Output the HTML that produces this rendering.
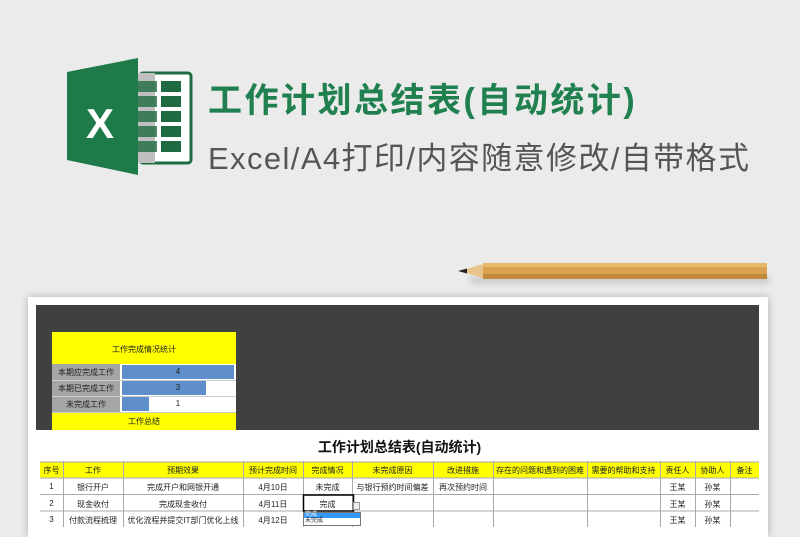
<!DOCTYPE html>
<html><head><meta charset="utf-8"><style>
*{margin:0;padding:0;box-sizing:border-box}
body{width:800px;height:526px;background:#ebebeb;position:relative;overflow:hidden;font-family:"Liberation Sans","Noto Sans CJK SC",sans-serif}
.a{position:absolute}
.t1{left:208px;top:73px;font-size:34px;font-weight:bold;color:#21804f;letter-spacing:2.5px;white-space:nowrap}
.t2{left:208px;top:133px;font-size:31px;color:#555;white-space:nowrap;letter-spacing:1.4px}
.c{position:absolute;font-size:8px;color:#222;text-align:center;white-space:nowrap;overflow:hidden}
</style></head><body>
<svg class="a" style="left:60px;top:50px" width="140" height="130" viewBox="60 50 140 130">
<rect x="140" y="73" width="51" height="90" rx="3" fill="#fff" stroke="#1e6b41" stroke-width="3"/>
<rect x="138" y="73" width="17" height="90" fill="#bfbfbf"/>
<g fill="#1e6b41">
<rect x="161" y="81" width="20" height="11"/><rect x="161" y="96" width="20" height="11"/><rect x="161" y="111" width="20" height="11"/><rect x="161" y="126" width="20" height="11"/><rect x="161" y="141" width="20" height="11"/>
<rect x="138" y="81" width="19" height="11" opacity=".8"/><rect x="138" y="96" width="19" height="11" opacity=".8"/><rect x="138" y="111" width="19" height="11" opacity=".8"/><rect x="138" y="126" width="19" height="11" opacity=".8"/><rect x="138" y="141" width="19" height="11" opacity=".8"/>
</g>
<polygon points="67,72 138,58 138,175 67,160" fill="#1f7a4a"/>
<text x="100" y="138" font-family="Liberation Sans" font-weight="bold" font-size="42" fill="#fff" text-anchor="middle">X</text>
</svg>
<div class="a t1">工作计划总结表(自动统计)</div>
<div class="a t2">Excel/A4打印/内容随意修改/自带格式</div>
<!-- pencil -->
<div class="a" style="left:470px;top:276px;width:300px;height:8px;background:#000;opacity:.12;filter:blur(3px)"></div>
<svg class="a" style="left:455px;top:260px" width="315" height="24">
<polygon points="5,11 28,4 28,18" fill="#e9c48a"/>
<polygon points="3,11 12,8.5 12,13.5" fill="#222"/>
<rect x="28" y="3" width="284" height="16" fill="#d9a250"/>
<rect x="28" y="3" width="284" height="4" fill="#e6b868"/>
<rect x="28" y="14" width="284" height="5" fill="#c08a3a"/>
</svg>
<!-- paper -->
<div class="a" style="left:28px;top:297px;width:740px;height:240px;background:#fff;box-shadow:0 0 8px rgba(0,0,0,.25)"></div>
<div class="a" style="left:36px;top:305px;width:723px;height:125px;background:#404040"></div>
<!-- summary -->
<div class="a" style="left:52px;top:332px;width:184px;height:98px;background:#ffff00"></div>
<div class="c" style="left:52px;top:344px;width:184px">工作完成情况统计</div>
<div class="a" style="left:52px;top:364px;width:184px;height:48px;background:#fff"></div>
<div class="a" style="left:52px;top:364px;width:68px;height:48px;background:#a6a6a6"></div>
<div class="c" style="left:52px;top:367px;width:68px">本期应完成工作</div>
<div class="c" style="left:52px;top:383px;width:68px">本期已完成工作</div>
<div class="c" style="left:52px;top:399px;width:68px">未完成工作</div>
<div class="a" style="left:122px;top:365px;width:112px;height:14px;background:#5f8fcb"></div>
<div class="a" style="left:122px;top:381px;width:84px;height:14px;background:#5f8fcb"></div>
<div class="a" style="left:122px;top:397px;width:27px;height:14px;background:#5f8fcb"></div>
<div class="a" style="left:52px;top:380px;width:184px;height:1px;background:#ccc"></div>
<div class="a" style="left:52px;top:396px;width:184px;height:1px;background:#ccc"></div>
<div class="a" style="left:52px;top:412px;width:184px;height:1px;background:#ccc"></div>
<div class="c" style="left:120px;top:367px;width:116px">4</div>
<div class="c" style="left:120px;top:383px;width:116px">3</div>
<div class="c" style="left:120px;top:399px;width:116px">1</div>
<div class="c" style="left:52px;top:416px;width:184px">工作总结</div>
<!-- table -->
<div class="a" style="left:40px;top:430px;width:719px;height:100px;background:#fff"></div>
<div class="a" style="left:40px;top:437px;width:719px;text-align:center;font-size:14px;font-weight:bold;color:#111">工作计划总结表(自动统计)</div>
<div class="a" style="left:40px;top:462px;width:719px;height:16px;background:#ffff00"></div>
<svg class="a" style="left:40px;top:461px" width="720" height="66">
<g stroke="#aaa" stroke-width="1">
<line x1="0" y1="1" x2="719" y2="1"/><line x1="0" y1="17" x2="719" y2="17"/><line x1="0" y1="33.5" x2="719" y2="33.5"/><line x1="0" y1="50" x2="719" y2="50"/>
<line x1="23.5" y1="0" x2="23.5" y2="66"/><line x1="83.5" y1="0" x2="83.5" y2="66"/><line x1="203.5" y1="0" x2="203.5" y2="66"/><line x1="263.5" y1="0" x2="263.5" y2="66"/><line x1="312.5" y1="0" x2="312.5" y2="66"/><line x1="393.5" y1="0" x2="393.5" y2="66"/><line x1="453.5" y1="0" x2="453.5" y2="66"/><line x1="547.5" y1="0" x2="547.5" y2="66"/><line x1="620.5" y1="0" x2="620.5" y2="66"/><line x1="655.5" y1="0" x2="655.5" y2="66"/><line x1="690.5" y1="0" x2="690.5" y2="66"/>
</g>
<rect x="263.5" y="34" width="50" height="16" fill="none" stroke="#000" stroke-width="1.5"/>
</svg>
<div class="c" style="left:40px;top:465px;width:23px">序号</div>
<div class="c" style="left:63px;top:465px;width:60px">工作</div>
<div class="c" style="left:123px;top:465px;width:120px">预期效果</div>
<div class="c" style="left:243px;top:465px;width:60px">预计完成时间</div>
<div class="c" style="left:303px;top:465px;width:49px">完成情况</div>
<div class="c" style="left:352px;top:465px;width:81px">未完成原因</div>
<div class="c" style="left:433px;top:465px;width:60px">改进措施</div>
<div class="c" style="left:493px;top:465px;width:94px">存在的问题和遇到的困难</div>
<div class="c" style="left:587px;top:465px;width:73px">需要的帮助和支持</div>
<div class="c" style="left:660px;top:465px;width:35px">责任人</div>
<div class="c" style="left:695px;top:465px;width:35px">协助人</div>
<div class="c" style="left:730px;top:465px;width:29px">备注</div>

<div class="c" style="left:40px;top:482px;width:23px">1</div>
<div class="c" style="left:63px;top:482px;width:60px">银行开户</div>
<div class="c" style="left:123px;top:482px;width:120px">完成开户和网银开通</div>
<div class="c" style="left:243px;top:482px;width:60px">4月10日</div>
<div class="c" style="left:303px;top:482px;width:49px">未完成</div>
<div class="c" style="left:352px;top:482px;width:81px">与银行预约时间偏差</div>
<div class="c" style="left:433px;top:482px;width:60px">再次预约时间</div>
<div class="c" style="left:660px;top:482px;width:35px">王某</div>
<div class="c" style="left:695px;top:482px;width:35px">孙某</div>

<div class="c" style="left:40px;top:499px;width:23px">2</div>
<div class="c" style="left:63px;top:499px;width:60px">现金收付</div>
<div class="c" style="left:123px;top:499px;width:120px">完成现金收付</div>
<div class="c" style="left:243px;top:499px;width:60px">4月11日</div>
<div class="c" style="left:303px;top:499px;width:49px">完成</div>
<div class="c" style="left:660px;top:499px;width:35px">王某</div>
<div class="c" style="left:695px;top:499px;width:35px">孙某</div>
<div class="a" style="left:353px;top:502px;width:7px;height:8px;border:1px solid #999;background:#eee"></div>

<div class="c" style="left:40px;top:515px;width:23px">3</div>
<div class="c" style="left:63px;top:515px;width:60px">付款流程梳理</div>
<div class="c" style="left:123px;top:515px;width:120px">优化流程并提交IT部门优化上线</div>
<div class="c" style="left:243px;top:515px;width:60px">4月12日</div>
<div class="c" style="left:660px;top:515px;width:35px">王某</div>
<div class="c" style="left:695px;top:515px;width:35px">孙某</div>
<div class="a" style="left:303px;top:512px;width:58px;height:14px;background:#fff;border:1px solid #777"></div>
<div class="a" style="left:304px;top:513px;width:56px;height:5px;background:#3399ff"></div>
<div class="a" style="left:305px;top:512px;font-size:6px;color:#fff;line-height:7px">完成</div>
<div class="a" style="left:305px;top:518px;font-size:6px;color:#222;line-height:7px">未完成</div>
</body></html>
